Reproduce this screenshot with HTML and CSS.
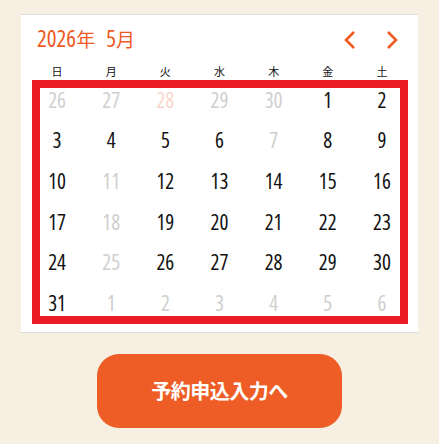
FILE: index.html
```html
<!DOCTYPE html>
<html lang="ja">
<head>
<meta charset="utf-8">
<link rel="stylesheet" href="styles.css">
</head>
<body>
<div class="page">
  <div class="card">
    <div class="cal-head">
      <div class="title">2026<span class="kanji">年</span><span class="month">5</span><span class="kanji">月</span></div>
      <div class="nav">
        <svg class="chev" width="14" height="20" viewBox="0 0 14 20"><polyline points="11,2 3,10 11,18" fill="none" stroke="#ee5a24" stroke-width="2.6"/></svg>
        <svg class="chev" width="14" height="20" viewBox="0 0 14 20"><polyline points="3,2 11,10 3,18" fill="none" stroke="#ee5a24" stroke-width="2.6"/></svg>
      </div>
    </div>
    <div class="week">
      <span>日</span><span>月</span><span>火</span><span>水</span><span>木</span><span>金</span><span>土</span>
    </div>
    <div class="days">
      <span class="off">26</span><span class="off">27</span><span class="pink">28</span><span class="off">29</span><span class="off">30</span><span>1</span><span>2</span>
      <span>3</span><span>4</span><span>5</span><span>6</span><span class="off">7</span><span>8</span><span>9</span>
      <span>10</span><span class="off">11</span><span>12</span><span>13</span><span>14</span><span>15</span><span>16</span>
      <span>17</span><span class="off">18</span><span>19</span><span>20</span><span>21</span><span>22</span><span>23</span>
      <span>24</span><span class="off">25</span><span>26</span><span>27</span><span>28</span><span>29</span><span>30</span>
      <span>31</span><span class="off">1</span><span class="off">2</span><span class="off">3</span><span class="off">4</span><span class="off">5</span><span class="off">6</span>
      <div class="frame"></div>
    </div>
  </div>
  <div class="btn-row">
    <a class="btn">予約申込入力へ</a>
  </div>
</div>
</body>
</html>
```

FILE: styles.css
```css
html, body {
  margin: 0;
  padding: 0;
  background: #f6efe2;
}
.page {
  padding-top: 14px;
  font-family: "Noto Sans CJK JP", sans-serif;
}
.card {
  margin-left: 21px;
  width: 397px;
  box-sizing: border-box;
  background: #fff;
  border-top: 1px solid #dcdcdc;
  border-bottom: 1px solid #dcdcdc;
  padding: 0 9px 8px 9px;
}
.cal-head {
  height: 48px;
  display: flex;
  align-items: center;
  justify-content: space-between;
  padding: 0 10px 0 7px;
}
.title {
  color: #ee5a24;
  font-family: "Open Sans", "Noto Sans CJK JP", sans-serif;
  font-stretch: 80%;
  font-variation-settings: "wdth" 80, "wght" 380;
  font-size: 23px;
  line-height: 1;
  margin-top: -2px;
}
.title .kanji {
  font-family: "Noto Sans CJK JP", sans-serif;
  font-variation-settings: normal;
  font-size: 19px;
}
.title .month {
  margin-left: 11px;
}
.nav {
  display: flex;
  gap: 28px;
  margin-top: 1px;
}
.chev {
  display: block;
}
.week {
  display: grid;
  grid-template-columns: repeat(7, 1fr);
  height: 17px;
  align-items: center;
  font-size: 11px;
  line-height: 1;
  color: #111;
  text-align: center;
}
.days {
  position: relative;
  display: grid;
  grid-template-columns: repeat(7, 1fr);
  grid-auto-rows: 40.67px;
  align-items: center;
  text-align: center;
  font-family: "Open Sans", "DejaVu Sans", sans-serif;
  font-stretch: 75%;
  font-variation-settings: "wdth" 75, "wght" 320;
  font-size: 21px;
  line-height: 1;
  color: #111;
}
.days .off {
  color: #cfcfcf;
}
.days .pink {
  color: #f9d6cb;
}
.frame {
  position: absolute;
  left: 2px;
  right: 1px;
  top: 0;
  bottom: 0;
  border: 8px solid #ec1c24;
}
.btn-row {
  display: flex;
  justify-content: center;
  padding-top: 21px;
}
.btn {
  width: 245px;
  height: 74px;
  border-radius: 22px;
  background: #ee5d26;
  color: #fff;
  font-weight: bold;
  font-size: 20px;
  display: flex;
  align-items: center;
  justify-content: center;
  letter-spacing: -0.5px;
}
```
